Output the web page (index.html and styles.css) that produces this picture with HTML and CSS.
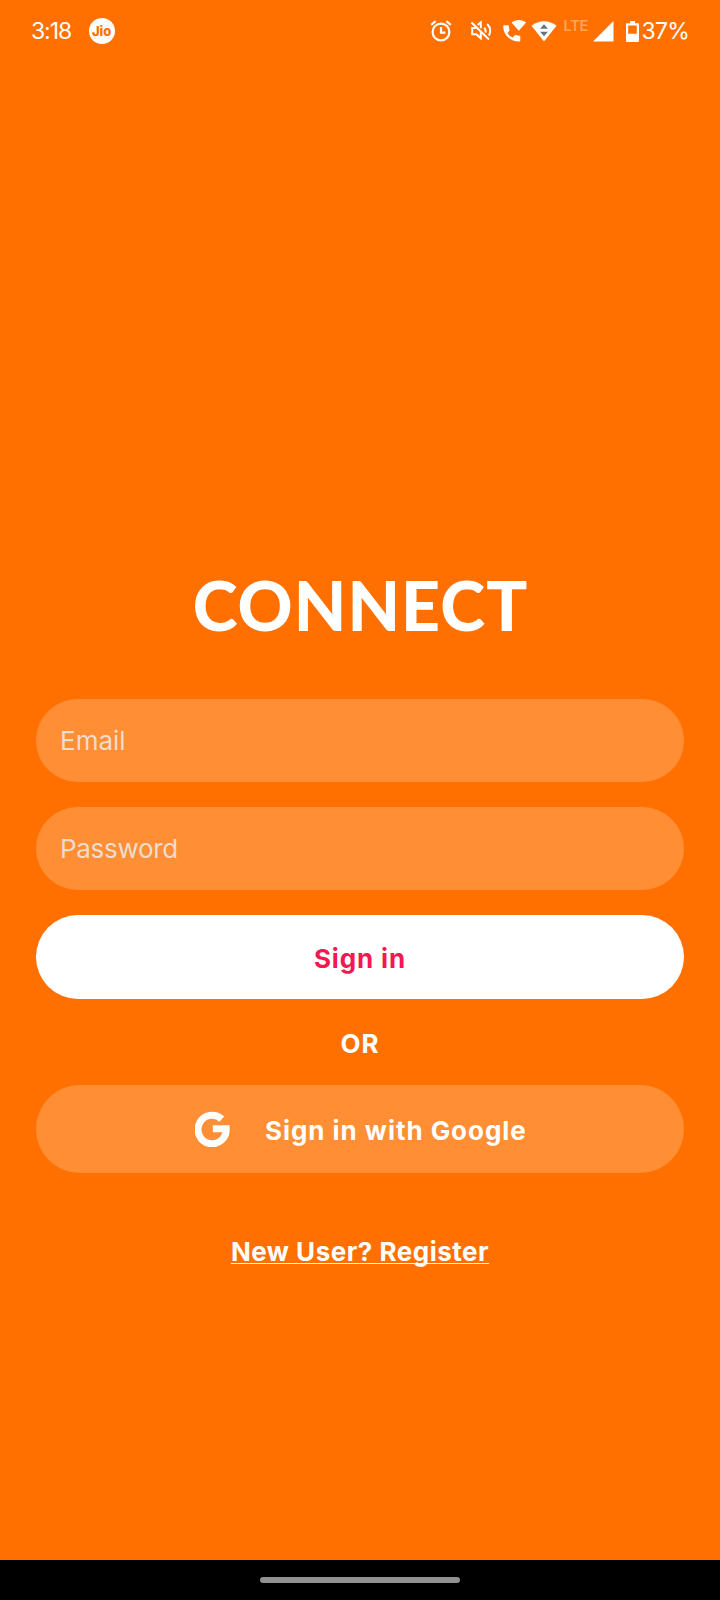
FILE: index.html
```html
<!DOCTYPE html>
<html lang="en">
<head>
<meta charset="utf-8">
<title>Connect</title>
<link rel="stylesheet" href="styles.css">
</head>
<body>
<div class="screen">
  <header class="status">
    <span class="clock">3:18</span>
    <span class="carrier">Jio</span>
    <div class="tray">
      <svg class="alarm" width="24" height="24" viewBox="0 0 24 24" fill="none" stroke="currentColor" stroke-width="2.2">
        <circle cx="12" cy="13" r="8.4"/>
        <path d="M12 8v5.600h4.300M2.200 5.800l4.400-3.700M21.800 5.800l-4.400-3.700"/>
      </svg>
      <svg class="mute" width="24" height="24" viewBox="0 0 24 24" fill="none" stroke="currentColor" stroke-width="2">
        <path d="M2.500 3.500l17.500 17M7 9H3.200v6.200h4l4.600 4.100v-6.500M8.600 6l3.200-2.600v5.800M15.200 8.600c1.400 1.600 1.700 3.300 1.100 5M18.200 5c3.200 3.300 3.700 7.700 1.700 11.400"/>
      </svg>
      <svg class="call" width="25" height="24" viewBox="0 0 25 24" fill="currentColor">
        <path d="M2.200 6.200h3.600c.7 0 1 .4 1.100 1 .1 1.300.3 2.800.6 3.800.1.500 0 .8-.3 1.100l-1.700 1.800c1.400 2.200 2.800 3.500 5.100 4.600l2.100-2.100c.4-.4.8-.4 1.200-.3 1.100.4 2.200.5 3.400.6.700 0 1 .4 1 1v3.700c0 .8-.4 1.100-1.100 1.100C8.400 22.500 1.300 16 1.200 7.300c0-.7.3-1.100 1-1.100Z"/>
        <path d="M9.500 3.500c4.200-3.400 10.400-3.400 14.600 0l-7.300 8.300Z"/>
      </svg>
      <svg class="wifi" width="26" height="23" viewBox="0 0 26 23">
        <path fill="currentColor" d="M.5 5.800c7.200-6.200 17.800-6.200 25 0L13 21.600Z"/>
        <path fill="#68727c" d="M13 4.200l3.900 4.500H9.100ZM13 16.200l3.900-4.500H9.100Z"/>
      </svg>
      <span class="lte">LTE</span>
      <svg class="signal" width="21" height="21" viewBox="0 0 21 21"><path fill="currentColor" d="M20.500 0v20.500H0Z"/></svg>
      <svg class="battery" width="13" height="21" viewBox="0 0 13 21">
        <path fill="currentColor" fill-rule="evenodd" d="M4 0h5v2.200h2.500c1 0 1.500.5 1.500 1.300v16c0 1-.5 1.500-1.500 1.500h-10C.5 21 0 20.500 0 19.500v-16c0-.8.5-1.300 1.500-1.300H4ZM2.200 4.500v8.200h8.600V4.500Z"/>
      </svg>
      <span class="percent">37%</span>
    </div>
  </header>
  <main class="login">
    <h1 class="title">CONNECT</h1>
    <div class="field email">Email</div>
    <div class="field password">Password</div>
    <div class="button">Sign in</div>
    <div class="or">OR</div>
    <div class="google">
      <svg class="logo" width="35" height="36" viewBox="0 0 35 36" fill="none" stroke="currentColor" stroke-width="7">
        <path d="M26.800 8.100A14.100 14.300 0 1 0 31.200 17.800H17.800"/>
      </svg>
      <span>Sign in with Google</span>
    </div>
    <a class="register">New User? Register</a>
  </main>
  <footer class="nav"><div class="handle"></div></footer>
</div>
</body>
</html>
```
FILE: styles.css
```css
* { box-sizing: border-box; }

body {
  margin: 0;
  font-family: Inter, "Open Sans", sans-serif;
  color: #fff;
}

.screen {
  width: 720px;
  height: 1600px;
  display: flex;
  flex-direction: column;
  background: #ff7000;
}

.status {
  height: 62px;
  padding: 0 31px;
  display: flex;
  align-items: center;
}

.clock {
  width: 58px;
  font-size: 23px;
  letter-spacing: -1.1px;
}

.carrier {
  width: 26px;
  height: 26px;
  border-radius: 50%;
  background: #fff;
  color: #ff7000;
  font-size: 13px;
  font-weight: 800;
  line-height: 26px;
  text-align: center;
}

.tray {
  margin-left: 314px;
  display: flex;
  align-items: center;
  flex-shrink: 0;
}

.mute { margin-left: 16px; }
.call { margin-left: 9px; }
.wifi { margin-left: 4px; }

.lte {
  width: 25px;
  margin: -11px 0 0 7px;
  font-size: 14.5px;
  font-weight: 600;
  letter-spacing: -0.3px;
  color: #ffa55f;
}

.signal { margin-left: 4px; }
.battery { margin-left: 12px; }

.percent {
  margin-left: 3px;
  font-size: 23px;
  letter-spacing: -0.8px;
}

.login {
  flex: 1;
  padding: 0 36px;
  display: flex;
  flex-direction: column;
  font-size: 26px;
}

.title {
  margin: 499px 0 0;
  height: 91px;
  font-family: Lato, sans-serif;
  font-size: 68px;
  font-weight: 900;
  line-height: 88px;
  letter-spacing: 1.1px;
  text-align: center;
  text-indent: 1px;
}

.field {
  height: 83px;
  padding: 0 24px;
  border-radius: 42px;
  background: #ff8e34;
  color: #efdccd;
  line-height: 83px;
}

.email { margin-top: 47px; }
.password {
  margin-top: 25px;
  letter-spacing: -0.3px;
}

.button {
  height: 84px;
  margin-top: 25px;
  border-radius: 42px;
  background: #fff;
  color: #f31851;
  font-weight: 700;
  line-height: 87px;
  letter-spacing: 0.85px;
  text-align: center;
}

.or {
  height: 86px;
  font-weight: 700;
  line-height: 89px;
  letter-spacing: 1px;
  text-align: center;
}

.google {
  height: 88px;
  padding-left: 159px;
  border-radius: 44px;
  background: #ff8e34;
  display: flex;
  align-items: center;
  gap: 35px;
  font-weight: 700;
  line-height: 40px;
  letter-spacing: 0.95px;
}

.google span { padding-top: 3px; }

.register {
  margin: 57px auto 0;
  font-weight: 700;
  line-height: 44px;
  letter-spacing: 0.5px;
  text-decoration: underline;
  text-decoration-thickness: 1px;
  text-underline-offset: 2px;
  text-decoration-skip-ink: none;
}

.nav {
  height: 40px;
  background: #000;
  display: flex;
  align-items: center;
  justify-content: center;
}

.handle {
  width: 200px;
  height: 6px;
  border-radius: 3px;
  background: #919191;
}
```
